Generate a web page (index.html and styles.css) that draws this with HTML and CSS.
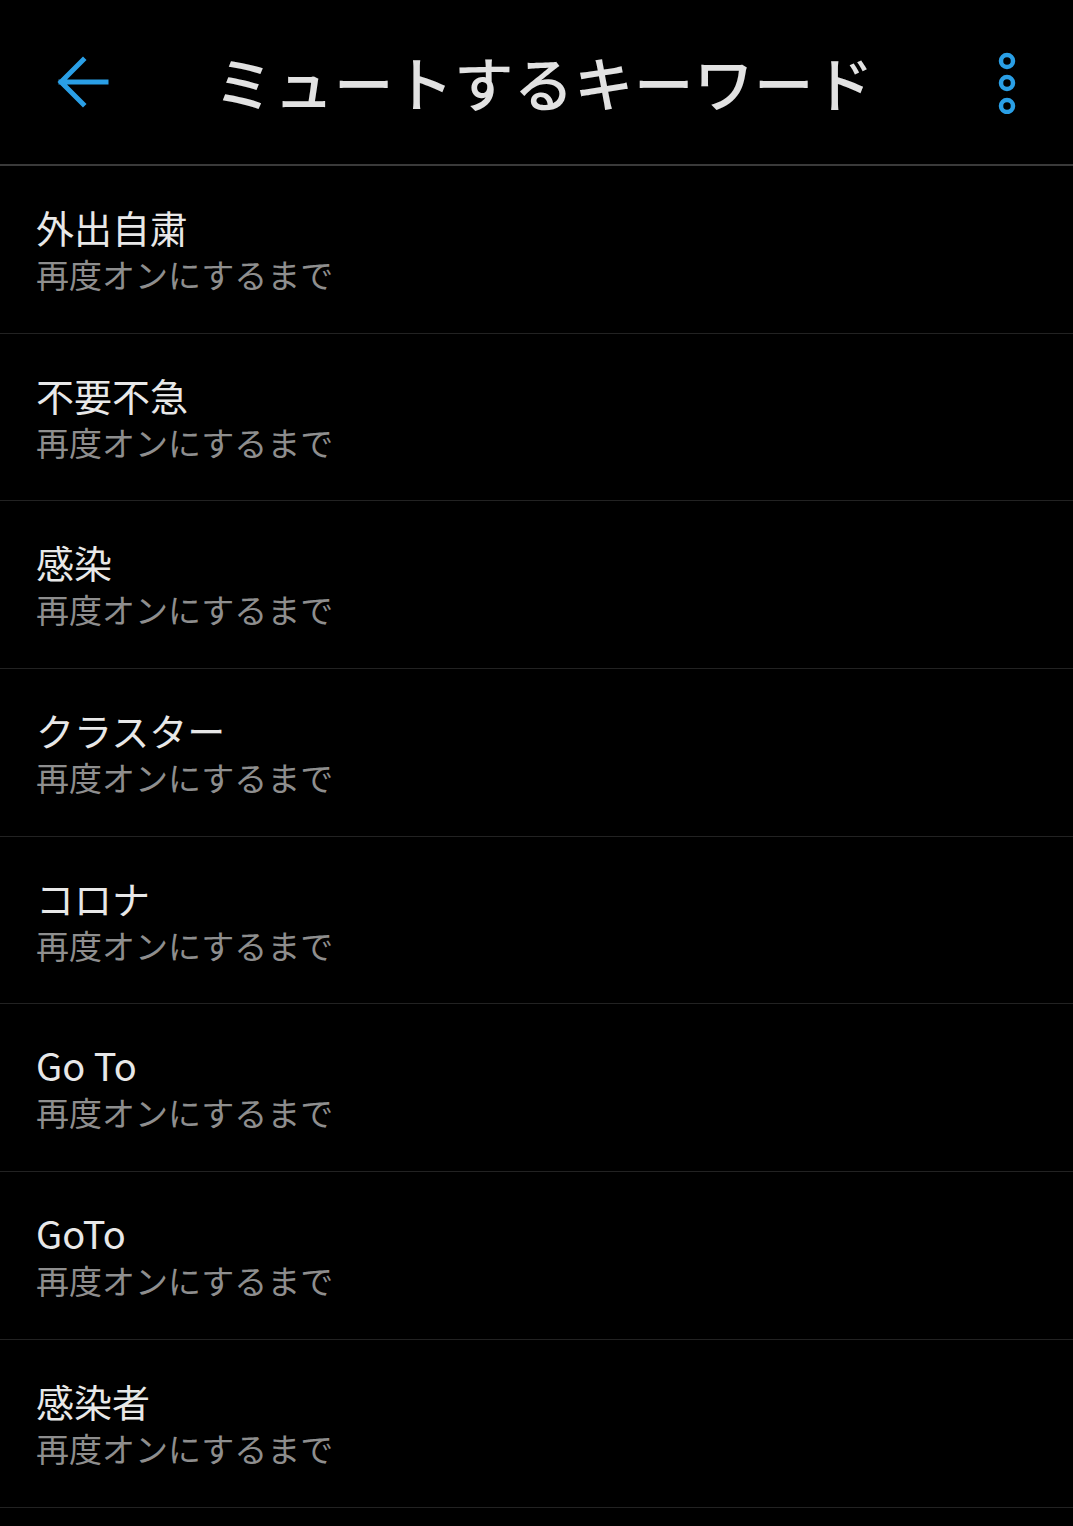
FILE: index.html
```html
<!DOCTYPE html>
<html lang="ja">
<head>
    <meta charset="UTF-8">
    <meta name="viewport" content="width=device-width, initial-scale=1.0">
    <title>ミュートするキーワード</title>
    <link rel="stylesheet" href="styles.css">
</head>
<body>
    <div class="container">
        <!-- Top Header -->
        <div class="top-header">
            <a class="icon-btn back" href="#">
                <svg width="56" height="56" viewBox="0 0 56 56">
                    <path d="M6 28 H51 M28 6 L6 28 L28 50" fill="none" stroke="#2a9fe6" stroke-width="5" stroke-linecap="square" stroke-linejoin="miter"/>
                </svg>
            </a>
            <div class="title">ミュートするキーワード</div>
            <a class="icon-btn menu" href="#">
                <svg width="24" height="64" viewBox="0 0 24 64">
                    <circle cx="12" cy="11" r="6" fill="none" stroke="#2a9fe6" stroke-width="4.5"/>
                    <circle cx="12" cy="33" r="6" fill="none" stroke="#2a9fe6" stroke-width="4.5"/>
                    <circle cx="12" cy="56" r="6" fill="none" stroke="#2a9fe6" stroke-width="4.5"/>
                </svg>
            </a>
        </div>

        <!-- Keyword list -->
        <div class="keyword-list">
            <div class="keyword-row">
                <div class="keyword">外出自粛</div>
                <div class="duration">再度オンにするまで</div>
            </div>
            <div class="keyword-row">
                <div class="keyword">不要不急</div>
                <div class="duration">再度オンにするまで</div>
            </div>
            <div class="keyword-row">
                <div class="keyword">感染</div>
                <div class="duration">再度オンにするまで</div>
            </div>
            <div class="keyword-row">
                <div class="keyword">クラスター</div>
                <div class="duration">再度オンにするまで</div>
            </div>
            <div class="keyword-row">
                <div class="keyword">コロナ</div>
                <div class="duration">再度オンにするまで</div>
            </div>
            <div class="keyword-row">
                <div class="keyword">Go To</div>
                <div class="duration">再度オンにするまで</div>
            </div>
            <div class="keyword-row">
                <div class="keyword">GoTo</div>
                <div class="duration">再度オンにするまで</div>
            </div>
            <div class="keyword-row">
                <div class="keyword">感染者</div>
                <div class="duration">再度オンにするまで</div>
            </div>
        </div>
    </div>
</body>
</html>
```

FILE: styles.css
```css
* {
    margin: 0;
    padding: 0;
    box-sizing: border-box;
}

body {
    background-color: #000;
    font-family: 'Noto Sans CJK JP', 'Noto Sans', sans-serif;
}

.container {
    width: 100%;
    min-height: 100vh;
    background-color: #000;
}

/* Top header */
.top-header {
    display: flex;
    align-items: center;
    height: 166px;
    padding: 0 54px 0 55px;
    border-bottom: 2px solid #3a3a3a;
}

.icon-btn {
    display: flex;
}

.top-header .title {
    flex: 1;
    text-align: center;
    padding-right: 18px;
    color: #e2e2e2;
    font-size: 59.5px;
    font-weight: 500;
    letter-spacing: 0.5px;
    line-height: 1;
}

/* Keyword rows */
.keyword-row {
    height: 167.7px;
    padding: 38px 0 0 36px;
    border-bottom: 1px solid #222;
}

.keyword {
    color: #e8e8e8;
    font-size: 38px;
    line-height: 46px;
}

.duration {
    color: #8e8e8e;
    font-size: 33px;
    line-height: 48px;
}
```
